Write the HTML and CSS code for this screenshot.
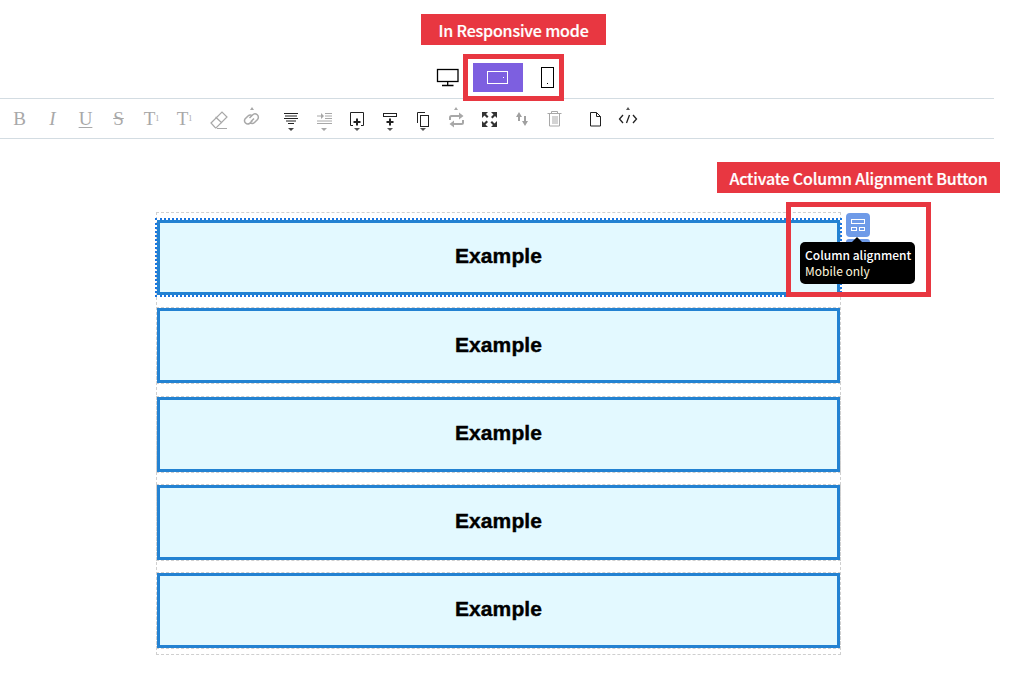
FILE: index.html
```html
<!DOCTYPE html>
<html lang="en">
<head>
<meta charset="utf-8">
<title>Responsive mode</title>
<link rel="stylesheet" href="styles.css">
</head>
<body>
<header class="top">
  <div class="label label-mode">In Responsive mode</div>
  <div class="devices">
    <button class="device">
      <svg width="24" height="19" viewBox="0 0 24 19" fill="none" stroke="#000" stroke-width="1.300"><rect x="1.500" y="1.500" width="20.500" height="12"/><path d="M11.700 13.500v4M6 17.500h11.500"/></svg>
    </button>
    <button class="device device-on">
      <svg width="22" height="13" viewBox="0 0 22 13" fill="none" stroke="#fff" stroke-width="1"><rect x=".5" y=".5" width="20" height="12"/><rect x="16" y="6" width="1" height="1" fill="#fff" stroke="none"/></svg>
    </button>
    <button class="device">
      <svg width="14" height="22" viewBox="0 0 14 22" fill="none" stroke="#000" stroke-width="1"><rect x=".5" y=".5" width="12" height="20"/><rect x="6" y="16" width="1" height="1" fill="#000" stroke="none"/></svg>
    </button>
  </div>
</header>

<div class="toolbar">
  <div class="tb-group tb-text">
    <span class="tb serif">B</span>
    <span class="tb serif it">I</span>
    <span class="tb serif ul">U</span>
    <span class="tb serif st">S</span>
    <span class="tb serif sm">T<sup>1</sup></span>
    <span class="tb serif sm">T<sub>1</sub></span>
    <span class="tb"><svg class="ic" viewBox="0 0 24 31" fill="none" stroke="#a8a8a8" stroke-width="1.200"><path d="M5 20 16 9l5 5L10 25H9.500z M9.500 14l6.500 6M11 25.500h10"/></svg></span>
    <span class="tb"><svg class="ic" viewBox="0 0 24 31" fill="none" stroke="#a8a8a8" stroke-width="1.500"><path d="M11 7h4l-2-3z" fill="#a8a8a8" stroke="none"/><path d="M12 18.500 15 15.500M10.500 15l3-3a3.300 3.300 0 0 1 5 4.500l-3 3a3.300 3.300 0 0 1-4.500 0M13.500 17.500l-3 3a3.300 3.300 0 0 1-4.500-4.500l3-3a3.300 3.300 0 0 1 4.500 0"/></svg></span>
  </div>
  <div class="tb-group tb-para">
    <span class="tb"><svg class="ic" viewBox="0 0 24 31" fill="none" stroke="#222"><path d="M5 10.500h14M6 13h12M5 15.500h14M7 18h10M9 20.500h6"/><path d="M9 25h6l-3 3z" fill="#444" stroke="none"/></svg></span>
    <span class="tb"><svg class="ic" viewBox="0 0 24 31" fill="none" stroke="#a8a8a8"><path d="M13 10.500h7M13 13h7M13 15.500h7M5 13h4M5 18h15M5 20.500h15"/><path d="M9 10l3 3-3 3zM9 25h6l-3 3z" fill="#a8a8a8" stroke="none"/></svg></span>
    <span class="tb"><svg class="ic" viewBox="0 0 24 31" fill="none" stroke="#222"><path d="M8 22.500H5.500v-13h13v13H16"/><path d="M8.500 19h7M12 15.500v7" stroke-width="2"/><path d="M9 25h6l-3 3z" fill="#555" stroke="none"/></svg></span>
    <span class="tb"><svg class="ic" viewBox="0 0 24 31" fill="none" stroke="#222"><rect x="5.500" y="10.500" width="13" height="3"/><path d="M8.500 19h7M12 15.500v7" stroke-width="2"/><path d="M9 25h6l-3 3z" fill="#555" stroke="none"/></svg></span>
    <span class="tb"><svg class="ic" viewBox="0 0 24 31" fill="none" stroke="#222"><path d="M14 9.500H6.500V20"/><rect x="9.500" y="12.500" width="8" height="11"/><path d="M9 25h6l-3 3z" fill="#555" stroke="none"/></svg></span>
    <span class="tb"><svg class="ic" viewBox="0 0 24 31" fill="none" stroke="#a8a8a8" stroke-width="2"><path d="M10 7h4l-2-3z" fill="#a8a8a8" stroke="none"/><path d="M6 17v-2.500Q6 13 7.500 13H15M19 17v2.500q0 1.500-1.500 1.500H10"/><path d="M15 9.500v7l4.500-3.500zM10 17.500v7L5.500 21z" fill="#a8a8a8" stroke="none"/></svg></span>
    <span class="tb"><svg class="ic" viewBox="0 0 24 31" fill="#333" stroke="none"><path d="M5 9h6l-2 2 2.500 2.500-1.500 1.500L7.500 12.500 5 15zM20 9v6l-2-2-2.500 2.500L14 14l2.500-2.500L14 9zM5 24v-6l2 2 2.500-2.500 1.500 1.500L8.500 21.500 11 24zM20 24h-6l2-2-2.500-2.500 1.500-1.500 2.500 2.500 2.500-2.500z"/></svg></span>
    <span class="tb"><svg class="ic" viewBox="0 0 24 31" fill="#a0a0a0" stroke="none"><path d="M9 9l3 5h-2v4H8v-4H6zM15 23l3-5h-2v-5h-2v5h-2z"/></svg></span>
    <span class="tb"><svg class="ic" viewBox="0 0 24 31" fill="none" stroke="#a8a8a8"><path d="M4.500 10.500h14M8.500 10.500v-2h6v2M6.500 10.500V23h10V10.500M10 13v8M12 13v8M14 13v8"/></svg></span>
  </div>
  <div class="tb-group tb-misc">
    <span class="tb"><svg class="ic" viewBox="0 0 24 31" fill="none" stroke="#222"><path d="M7.500 9.500h6l4 4v9.500h-10zM13.500 9.500v4h4"/></svg></span>
    <span class="tb"><svg class="ic" viewBox="0 0 24 31" fill="none" stroke="#222" stroke-width="1.300"><path d="M10 7h4l-2-3z" fill="#555" stroke="none"/><path d="M7 12l-3.500 4L7 20M17 12l3.500 4L17 20M13.500 12l-3 8"/></svg></span>
  </div>
</div>

<main class="canvas">
  <div class="table">
    <div class="cell cell-active">Example</div>
    <div class="cell">Example</div>
    <div class="cell">Example</div>
    <div class="cell">Example</div>
    <div class="cell">Example</div>
  </div>
  <button class="align-btn">
    <svg width="15" height="13" viewBox="0 0 15 13" fill="none" stroke="#fff"><rect x=".5" y=".5" width="13" height="4"/><rect x=".5" y="8.500" width="5" height="3"/><rect x="8.500" y="8.500" width="5" height="3"/></svg>
  </button>
  <span class="align-btn align-btn-under"></span>
  <div class="tip">
    <strong>Column alignment</strong>
    <span>Mobile only</span>
  </div>
</main>

<div class="label label-activate">Activate Column Alignment Button</div>
<div class="frame frame-devices"></div>
<div class="frame frame-align"></div>
</body>
</html>
```
FILE: styles.css
```css
* { box-sizing: border-box; }
html, body { margin: 0; padding: 0; }
body {
  position: relative;
  width: 1023px;
  height: 684px;
  background: #fff;
  overflow: hidden;
  font-family: "Noto Sans", "Noto Sans CJK KR", sans-serif;
}
.top {
  display: flex;
  flex-direction: column;
  align-items: center;
  padding-top: 14px;
  height: 98px;
}
.label {
  background: #e83741;
  color: #fff;
  font-family: "Noto Sans CJK KR", sans-serif;
  font-weight: 500;
  font-size: 16px;
  letter-spacing: -0.17px;
  -webkit-text-stroke: 0.2px #fff;
  height: 31px;
  display: flex;
  align-items: center;
  justify-content: center;
}
.label-mode { width: 185px; margin-left: 4px; }
.label-activate {
  position: absolute;
  left: 717px;
  top: 162px;
  width: 283px;
}
.devices {
  display: flex;
  align-items: center;
  margin-top: 18px;
  margin-right: 27px;
}
.device {
  border: 0;
  padding: 0;
  background: none;
  width: 50px;
  height: 29px;
  display: flex;
  align-items: center;
  justify-content: center;
}
.device-on { background: #7d5fe0; }
.toolbar {
  width: 994px;
  height: 41px;
  border-top: 1px solid #d3dce2;
  border-bottom: 1px solid #d3dce2;
  display: flex;
  align-items: center;
  color: #a8a8a8;
}
.tb-group { display: flex; align-items: center; }
.tb-text { margin-left: 3px; }
.tb-para { margin-left: 7px; }
.tb-misc { margin-left: 7px; }
.tb {
  width: 33px;
  height: 31px;
  display: flex;
  align-items: center;
  justify-content: center;
  flex: none;
}
.ic { width: 24px; height: 31px; display: block; }
.serif {
  font-family: "Liberation Serif", serif;
  font-size: 19px;
  line-height: 1;
}
.it { font-style: italic; }
.ul { text-decoration: underline; text-underline-offset: 2px; }
.st { text-decoration: line-through; }
.sm sup, .sm sub { font-size: 8px; line-height: 0; }
.canvas {
  position: relative;
  padding: 73px 0 0 156px;
}
.table {
  width: 685px;
  height: 443px;
  border: 1px dashed #cfcfcf;
  padding: 7px 0 0;
  display: flex;
  flex-direction: column;
  gap: 13.250px;
}
.cell {
  height: 75px;
  padding-bottom: 2.500px;
  background: #e3f9ff;
  border: 3px solid #2382d2;
  outline: 1px dashed #cfcfcf;
  display: flex;
  align-items: center;
  justify-content: center;
  font-family: "Liberation Sans", Arial, sans-serif;
  font-weight: 700;
  font-size: 21px;
  letter-spacing: 0.1px;
  -webkit-text-stroke: 0.4px #000;
  color: #000;
}
.cell-active { outline: 2px dotted #1a75e0; outline-offset: 0; padding-bottom: 3px; }
.align-btn {
  position: absolute;
  left: 846px;
  top: 74px;
  width: 24px;
  height: 24px;
  border: 0;
  padding: 0;
  border-radius: 4px;
  background: #6f9be8;
  display: flex;
  align-items: center;
  justify-content: center;
}
.align-btn-under { top: 100px; height: 6px; }
.tip {
  position: absolute;
  left: 800px;
  top: 103px;
  width: 115px;
  height: 42px;
  background: #000;
  border-radius: 5px;
  padding: 5px;
  display: flex;
  flex-direction: column;
  font-family: "Noto Sans CJK KR", sans-serif;
  font-size: 12px;
  line-height: 16px;
  white-space: nowrap;
  color: #fff6dd;
}
.tip strong { font-weight: 500; color: #fff; }
.tip::before {
  content: "";
  position: absolute;
  left: 52px;
  top: -5px;
  border: 5px solid transparent;
  border-top: 0;
  border-bottom-color: #000;
}
.frame {
  position: absolute;
  border: 5px solid #e83741;
  pointer-events: none;
}
.frame-devices { left: 463px; top: 54px; width: 101px; height: 47px; }
.frame-align { left: 786px; top: 202px; width: 145px; height: 95px; }
```
